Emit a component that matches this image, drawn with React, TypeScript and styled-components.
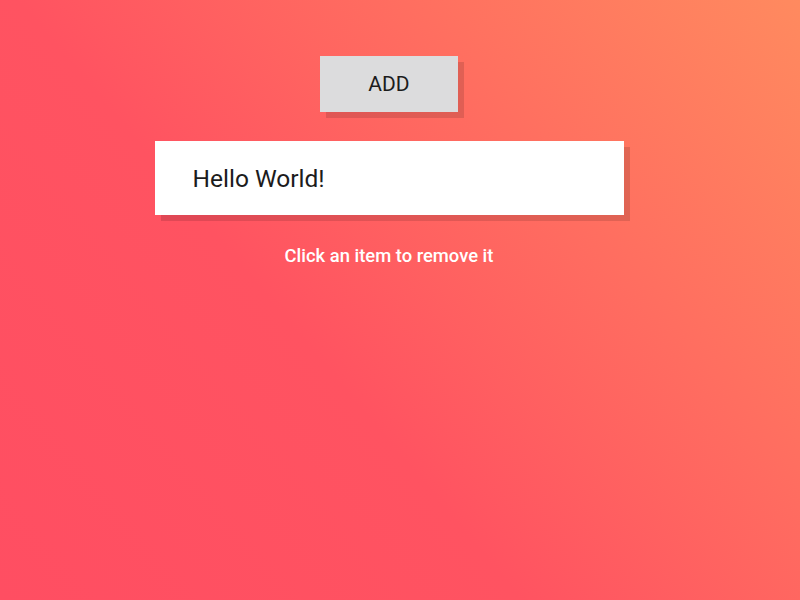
import styled, { createGlobalStyle } from 'styled-components';
import { useState } from 'react';

const GlobalStyle = createGlobalStyle`
	html, body {
		margin: 0;
		padding: 0;
		height: 100%;
	}
	body {
		font-family: Roboto, 'Liberation Sans', sans-serif;
		background: linear-gradient(50deg, #ff4e62 0%, #ff5361 40%, #ff8a5f 100%);
		background-attachment: fixed;
		min-height: 600px;
	}
`;

const Page = styled.div`
	width: 778px;
	display: flex;
	flex-direction: column;
	align-items: center;
	padding-top: 56px;
`;

const AddButton = styled.button`
	width: 138px;
	height: 56px;
	border: none;
	background: #dcdcdd;
	color: #1c1c1c;
	font-family: Roboto, 'Liberation Sans', sans-serif;
	font-size: 21px;
	box-shadow: 6px 6px 0 rgba(0, 0, 0, 0.12);
	cursor: pointer;
`;

const List = styled.ul`
	list-style: none;
	margin: 29px 0 0;
	padding: 0;
`;

const Item = styled.li`
	width: 469px;
	height: 74px;
	box-sizing: border-box;
	display: flex;
	align-items: center;
	padding-left: 38px;
	background: #fff;
	color: #1c1c1c;
	font-size: 24.5px;
	box-shadow: 6px 6px 0 rgba(0, 0, 0, 0.12);
	cursor: pointer;
`;

const Hint = styled.p`
	margin: 30px 0 0;
	color: #fff;
	font-size: 18.4px;
	font-weight: 500;
`;

const App = () => {
	const [items, setItems] = useState<string[]>(['Hello World!']);

	return (
		<>
			<GlobalStyle />
			<Page>
				<AddButton onClick={() => setItems([...items, 'Hello World!'])}>ADD</AddButton>
				<List>
					{items.map((text, idx) => (
						<Item key={idx} onClick={() => setItems(items.filter((_, i) => i !== idx))}>
							{text}
						</Item>
					))}
				</List>
				<Hint>Click an item to remove it</Hint>
			</Page>
		</>
	);
};

export default App;
